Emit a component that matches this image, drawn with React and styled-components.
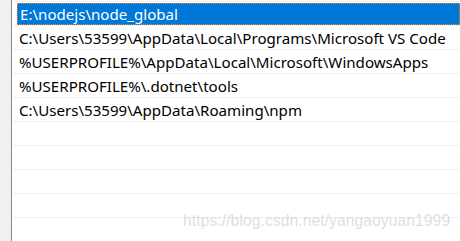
import React from 'react';
import styled, { createGlobalStyle } from 'styled-components';

const GlobalStyle = createGlobalStyle`
  html, body {
    margin: 0;
    padding: 0;
    background: #fff;
  }
  #root {
    width: 460px;
    height: 241px;
    overflow: hidden;
  }
`;

const Frame = styled.div`
  display: flex;
  width: 460px;
  height: 241px;
  overflow: hidden;
  position: relative;
`;

const Gutter = styled.div`
  width: 11px;
  flex: none;
  background-color: #f0f0f0;
  border-right: 1px solid #828790;
`;

const List = styled.ul`
  flex: 1;
  margin: 0;
  padding: 1px 0 0;
  list-style: none;
  background-color: #fff;
  overflow: hidden;
`;

const Row = styled.li`
  display: flex;
  align-items: center;
  height: 23px;
  margin-left: 1px;
  border-top: 1px solid #f0f0f0;
  white-space: nowrap;
`;

const Cell = styled.div`
  display: flex;
  align-items: center;
  height: ${(p) => (p.$selected ? '22px' : '23px')};
  margin-left: ${(p) => (p.$selected ? '4px' : '0')};
  padding-left: ${(p) => (p.$selected ? '2px' : '6px')};
  flex: 1;
  box-sizing: border-box;
  background-color: ${(p) => (p.$selected ? '#0078d7' : 'transparent')};
  color: ${(p) => (p.$selected ? '#fff' : '#000')};
  border: ${(p) => (p.$selected ? '1px dotted #ff8728' : 'none')};
  font-family: 'Noto Sans', 'Open Sans', sans-serif;
  font-size: 15.1px;
`;

const Watermark = styled.div`
  position: absolute;
  left: 183px;
  top: 212px;
  font-family: 'Liberation Sans', Arial, sans-serif;
  font-size: 15.6px;
  letter-spacing: 0.1px;
  color: rgba(200, 200, 200, 0.6);
  white-space: nowrap;
  pointer-events: none;
`;

const paths = [
  'E:\\nodejs\\node_global',
  'C:\\Users\\53599\\AppData\\Local\\Programs\\Microsoft VS Code',
  '%USERPROFILE%\\AppData\\Local\\Microsoft\\WindowsApps',
  '%USERPROFILE%\\.dotnet\\tools',
  'C:\\Users\\53599\\AppData\\Roaming\\npm',
  '',
  '',
  '',
  '',
  '',
];

export default function App() {
  return (
    <>
      <GlobalStyle />
      <Frame>
        <Gutter />
        <List>
          {paths.map((p, i) => (
            <Row key={i}>
              <Cell $selected={i === 0}>{p}</Cell>
            </Row>
          ))}
        </List>
        <Watermark>https://blog.csdn.net/yangaoyuan1999</Watermark>
      </Frame>
    </>
  );
}
